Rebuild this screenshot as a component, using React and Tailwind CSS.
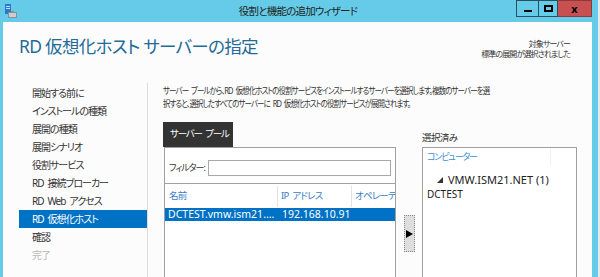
import React from 'react';

const font = { fontFamily: '"Noto Sans", "Noto Sans CJK JP", sans-serif' };

const steps = [
  '開始する前に',
  'インストールの種類',
  '展開の種類',
  '展開シナリオ',
  '役割サービス',
  'RD\u2002接続ブローカー',
  'RD\u2002Web\u2002アクセス',
  'RD\u2002仮想化ホスト',
  '確認',
  '完了',
];

const WizardIcon = () => (
  <svg width="14" height="16" viewBox="0 0 14 16">
    <rect x="1" y="1" width="6" height="10" fill="#2f78c8" />
    <rect x="2" y="3" width="4" height="1" fill="#bfe0ff" />
    <rect x="2" y="5" width="4" height="1" fill="#bfe0ff" />
    <rect x="4" y="9" width="9" height="6" fill="#8a8f96" />
    <rect x="5" y="10" width="7" height="4" fill="#c9ced4" />
    <rect x="7" y="8" width="3" height="2" fill="#8a8f96" />
  </svg>
);

const App = () => {
  return (
    <div
      className="w-[600px] h-[277px] bg-[#e8e8e8] overflow-hidden [font-feature-settings:'palt']"
      style={font}
    >
      <div className="w-[598px] h-[277px] bg-[#66cbe8] flex flex-col">
        {/* Title bar */}
        <div className="h-[22px] flex items-start shrink-0">
          <div className="pl-[4px] pt-[3px] shrink-0">
            <WizardIcon />
          </div>
          <div className="flex-1 text-center text-[10.5px] tracking-[-0.8px] text-[#1e1e1e] pt-[4px] pl-[62px] whitespace-nowrap">
            役割と機能の追加ウィザード
          </div>
          <div className="flex h-[17px] mr-[6px] shrink-0">
            <div className="w-[22px] border border-[#2b4f5c] border-r-0 flex items-center justify-center">
              <div className="w-[8px] h-[2px] bg-black mt-[4px]" />
            </div>
            <div className="w-[20px] border border-[#2b4f5c] flex items-center justify-center">
              <div className="w-[9px] h-[7px] border-2 border-black" />
            </div>
            <div className="w-[34px] bg-[#c75050] border border-[#8c3a3a] border-l-0 flex items-center justify-center text-[11px] font-bold text-black leading-none">
              x
            </div>
          </div>
        </div>

        {/* Content */}
        <div className="flex-1 ml-[3px] mr-[6px] bg-[#fcfcfc] flex flex-col overflow-hidden">
          {/* Header */}
          <div className="h-[61px] flex justify-between shrink-0">
            <div className="pl-[16px] pt-[16px] text-[17.5px] text-[#246b98] leading-none tracking-[-0.7px] whitespace-nowrap">
              RD 仮想化ホスト サーバーの指定
            </div>
            <div className="pr-[22px] pt-[17px] text-right text-[8px] tracking-[-0.9px] leading-[10px] text-[#333] whitespace-nowrap">
              <div>対象サーバー</div>
              <div>標準の展開が選択されました</div>
            </div>
          </div>

          {/* Body */}
          <div className="flex flex-1">
            {/* Step list */}
            <div className="w-[145px] shrink-0 pl-[16px] border-r border-[#dcdcdc] pt-[1px]">
              {steps.map((s, i) => (
                <div
                  key={s}
                  className={`h-[18px] pl-[13px] flex items-center text-[10px] tracking-[-1px] whitespace-nowrap ${
                    i === 7
                      ? 'bg-[#0072c6] text-white'
                      : i === 9
                      ? 'text-[#b8b8b8]'
                      : 'text-[#333]'
                  }`}
                >
                  {s}
                </div>
              ))}
            </div>

            {/* Main */}
            <div className="flex-1 min-w-0 pl-[15px] flex flex-col">
              <div className="text-[9px] leading-[13px] text-[#333] whitespace-nowrap tracking-[-1.1px] pt-[1px] origin-left scale-x-[0.833]">
                <div>サーバー{'\u2002'}プールから、RD{'\u2002'}仮想化ホストの役割サービスをインストールするサーバーを選択します。複数のサーバーを選</div>
                <div>択すると、選択したすべてのサーバーに{'\u2002'}RD{'\u2002'}仮想化ホストの役割サービスが展開されます。</div>
              </div>

              <div className="flex mt-[12px] flex-1">
                {/* Server pool */}
                <div className="w-[233px] shrink-0 flex flex-col">
                  <div className="w-[70px] h-[25px] bg-[#333] text-white text-[9.5px] tracking-[-1.2px] pl-[7px] flex items-center whitespace-nowrap">
                    サーバー{'\u2002'}プール
                  </div>
                  <div className="ml-[1px] flex-1 border border-b-0 border-[#a0a0a0] bg-white flex flex-col">
                    <div className="h-[36px] flex items-center pl-[4px] pr-[4px] border-b border-[#a0a0a0]">
                      <span className="text-[9px] tracking-[-1px] text-[#333] w-[39px] whitespace-nowrap mt-[4px]">フィルター:</span>
                      <div className="flex-1 h-[16px] border border-[#a8a8a8] bg-white mt-[4px]" />
                    </div>
                    <div className="h-[21px] flex items-center text-[9.5px] tracking-[-0.8px] text-[#3a80c4] mt-[2px] whitespace-nowrap">
                      <div className="w-[113px] pl-[4px] h-full flex items-center border-r border-[#e3e3e3]">名前</div>
                      <div className="w-[74px] pl-[3px] h-full flex items-center border-r border-[#e3e3e3]">IP{'\u2002'}アドレス</div>
                      <div className="flex-1 pl-[3px] overflow-hidden">オペレーティ</div>
                    </div>
                    <div className="h-[13px] mt-[1px] bg-[#0072c6] text-white text-[10.5px] flex items-center whitespace-nowrap">
                      <div className="w-[113px] pl-[3px] overflow-hidden">DCTEST.vmw.ism21.…</div>
                      <div className="pl-[4px]">192.168.10.91</div>
                    </div>
                  </div>
                </div>

                {/* Add arrow */}
                <div className="w-[26px] shrink-0 flex justify-center pt-[93px]">
                  <div className="w-[11px] h-[37px] bg-[#dedede] border border-dotted border-[#888] flex items-center justify-center">
                    <svg width="7" height="8" viewBox="0 0 7 8">
                      <polygon points="0,0 7,4 0,8" fill="#000" />
                    </svg>
                  </div>
                </div>

                {/* Selected */}
                <div className="w-[155px] shrink-0 flex flex-col mt-[8px]">
                  <div className="h-[16px] text-[9.5px] tracking-[-0.6px] text-[#333] flex items-center whitespace-nowrap">選択済み</div>
                  <div className="flex-1 mt-[1px] border border-b-0 border-[#a0a0a0] bg-white">
                    <div className="flex h-[17px]">
                      <div className="w-[128px] pl-[4px] flex items-center text-[9px] tracking-[-1.2px] text-[#3a8fd4] border-r border-[#f0f0f0] whitespace-nowrap">
                        コンピューター
                      </div>
                    </div>
                    <div className="flex items-center pl-[14px] mt-[8px] h-[14px] text-[11px] text-[#222] whitespace-nowrap">
                      <svg width="6" height="6" viewBox="0 0 6 6" className="mr-[5px]">
                        <polygon points="6,0 6,6 0,6" fill="#333" />
                      </svg>
                      VMW.ISM21.NET (1)
                    </div>
                    <div className="pl-[4px] h-[14px] flex items-center text-[10px] text-[#222]">DCTEST</div>
                  </div>
                </div>
              </div>
            </div>
          </div>
        </div>
      </div>
    </div>
  );
};

export default App;
